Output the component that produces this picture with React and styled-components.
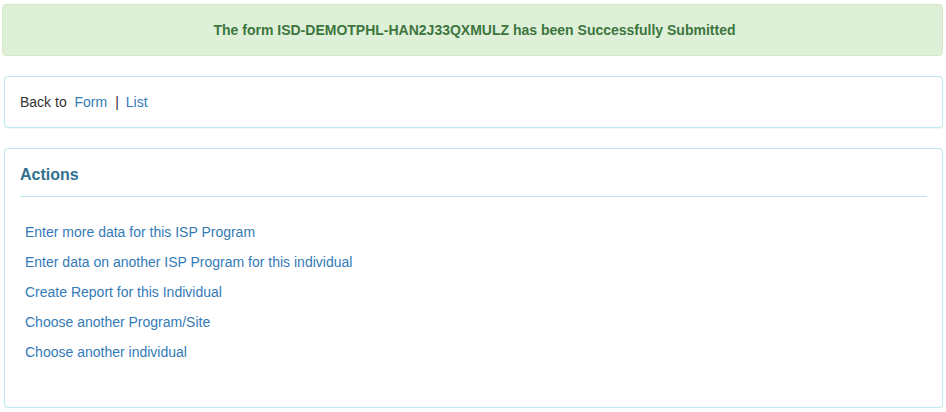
import React from "react";
import styled, { createGlobalStyle } from "styled-components";

const Global = createGlobalStyle`
  html, body { margin: 0; padding: 0; background: #fff; }
  body { font-family: "Liberation Sans", Arial, Helvetica, sans-serif; font-size: 14px; color: #333; }
`;

const Page = styled.div`
  padding: 4px 3px 0 2px;
  display: flex;
  flex-direction: column;
  gap: 20px;
`;

const Alert = styled.div`
  background: #dff0d8;
  border: 1px solid #d6e9c6;
  border-radius: 4px;
  color: #3c763d;
  font-weight: bold;
  font-size: 14px;
  line-height: 20px;
  padding: 15px 13px 15px 17px;
  text-align: center;
`;

const Panel = styled.div`
  margin-left: 2px;
  border: 1px solid #bce8f1;
  border-radius: 4px;
  padding: 15px;
  background: #fff;
  box-shadow: 0 1px 1px rgba(0, 0, 0, 0.05);
`;

const BackLine = styled.div`
  line-height: 20px;
  font-size: 14px;
  color: #333;
`;

const Link = styled.a`
  color: #337ab7;
  text-decoration: none;
  cursor: pointer;
`;

const Sep = styled.span`
  margin: 0 7px 0 8px;
`;

const Heading = styled.h3`
  margin: 1px 0 0;
  font-size: 16px;
  line-height: 20px;
  font-weight: bold;
  color: #31708f;
`;

const Rule = styled.hr`
  margin: 11px 0 0;
  border: 0;
  border-top: 1px solid #bce8f1;
`;

const ActionList = styled.ul`
  list-style: none;
  margin: 20px 0 25px;
  padding: 0 0 0 5px;
`;

const ActionItem = styled.li`
  line-height: 30px;
  font-size: 14px;
`;

const actions = [
  "Enter more data for this ISP Program",
  "Enter data on another ISP Program for this individual",
  "Create Report for this Individual",
  "Choose another Program/Site",
  "Choose another individual",
];

export default function App() {
  return (
    <>
      <Global />
      <Page>
        <Alert>The form ISD-DEMOTPHL-HAN2J33QXMULZ has been Successfully Submitted</Alert>
        <Panel>
          <BackLine>
            Back to&nbsp; <Link>Form</Link>
            <Sep>|</Sep>
            <Link>List</Link>
          </BackLine>
        </Panel>
        <Panel>
          <Heading>Actions</Heading>
          <Rule />
          <ActionList>
            {actions.map((a) => (
              <ActionItem key={a}>
                <Link>{a}</Link>
              </ActionItem>
            ))}
          </ActionList>
        </Panel>
      </Page>
    </>
  );
}
